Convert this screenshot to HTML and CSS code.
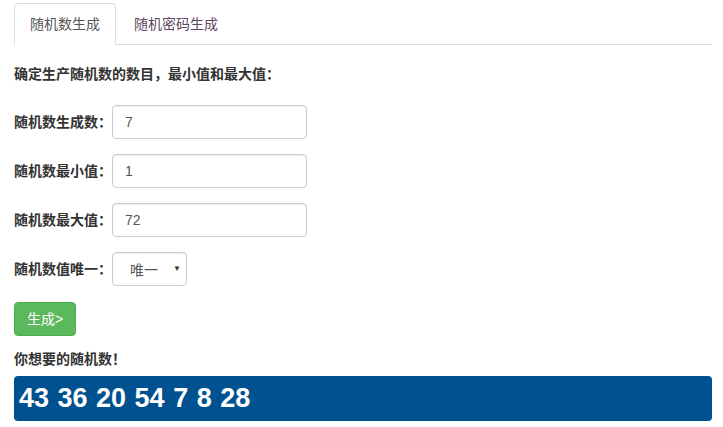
FILE: index.html
```html
<!DOCTYPE html>
<html lang="zh-CN">
<head>
<meta charset="utf-8">
<title>随机数生成</title>
<link rel="stylesheet" href="styles.css">
</head>
<body>
<div class="page">
  <ul class="tabs">
    <li class="tab active"><a href="#">随机数生成</a></li>
    <li class="tab"><a href="#" class="visited">随机密码生成</a></li>
  </ul>
  <div class="panel">
    <p class="lead">确定生产随机数的数目，最小值和最大值：</p>
    <div class="row"><label class="label">随机数生成数：</label><input class="input" type="text" value="7"></div>
    <div class="row"><label class="label">随机数最小值：</label><input class="input" type="text" value="1"></div>
    <div class="row"><label class="label">随机数最大值：</label><input class="input" type="text" value="72"></div>
    <div class="row"><label class="label">随机数值唯一：</label>
      <div class="select-wrap">
        <select class="select"><option>唯一</option></select>
        <span class="arrow">▼</span>
      </div>
    </div>
    <button class="btn" type="button">生成&gt;</button>
    <p class="result-title">你想要的随机数！</p>
    <div class="result">43 36 20 54 7 8 28</div>
  </div>
</div>
</body>
</html>
```

FILE: styles.css
```css
* { box-sizing: border-box; }
html, body { margin: 0; padding: 0; background: #fff; }
body {
  font-family: "Liberation Sans", "Noto Sans CJK SC", Arial, sans-serif;
  font-size: 14px;
  line-height: 20px;
  color: #333;
}
.page { padding: 3px 11px 0 14px; }
.tabs {
  list-style: none;
  margin: 0;
  padding: 0;
  display: flex;
  border-bottom: 1px solid #ddd;
}
.tab { margin-bottom: -1px; margin-right: 2px; }
.tab a {
  display: block;
  padding: 10px 15px;
  line-height: 20px;
  border: 1px solid transparent;
  border-radius: 4px 4px 0 0;
  text-decoration: none;
  color: #555;
}
.tab.active a {
  border-color: #ddd;
  border-bottom-color: #fff;
  background: #fff;
  color: #555;
}
.tab a.visited { color: #5e4560; }
.panel { display: flex; flex-direction: column; align-items: flex-start; }
.lead {
  margin: 19px 0 21px;
  font-weight: bold;
  color: #333;
}
.row {
  display: flex;
  align-items: center;
  margin-bottom: 15px;
}
.label { font-weight: bold; color: #333; }
.input {
  width: 195px;
  height: 34px;
  padding: 6px 12px;
  border: 1px solid #ccc;
  border-radius: 4px;
  font-family: "Liberation Sans", Arial, sans-serif;
  font-size: 14px;
  color: #555;
  box-shadow: inset 0 1px 1px rgba(0,0,0,.075);
  outline: none;
}
.select-wrap { position: relative; display: flex; }
.select {
  appearance: none;
  -webkit-appearance: none;
  width: 75px;
  height: 34px;
  padding: 6px 12px 6px 17px;
  border: 1px solid #ccc;
  border-radius: 4px;
  background: #fff;
  font-family: "Noto Sans CJK SC", sans-serif;
  font-size: 14px;
  color: #555;
  box-shadow: inset 0 1px 1px rgba(0,0,0,.075);
}
.arrow {
  position: absolute;
  right: 6px;
  top: 12px;
  font-size: 8px;
  line-height: 10px;
  color: #333;
  pointer-events: none;
}
.btn {
  margin-top: 1px;
  height: 34px;
  padding: 6px 12px;
  border: 1px solid #4cae4c;
  border-radius: 4px;
  background: #5cb85c;
  color: #fff;
  font-family: "Liberation Sans", "Noto Sans CJK SC", sans-serif;
  font-size: 14px;
  line-height: 20px;
}
.result-title {
  margin: 13px 0 7px;
  font-weight: bold;
  color: #333;
}
.result {
  align-self: stretch;
  height: 45px;
  padding: 0 5px;
  background: #00518f;
  border-radius: 4px;
  color: #fff;
  font-family: "Liberation Sans", Arial, sans-serif;
  font-weight: bold;
  font-size: 27px;
  word-spacing: 1px;
  line-height: 45px;
}
```
